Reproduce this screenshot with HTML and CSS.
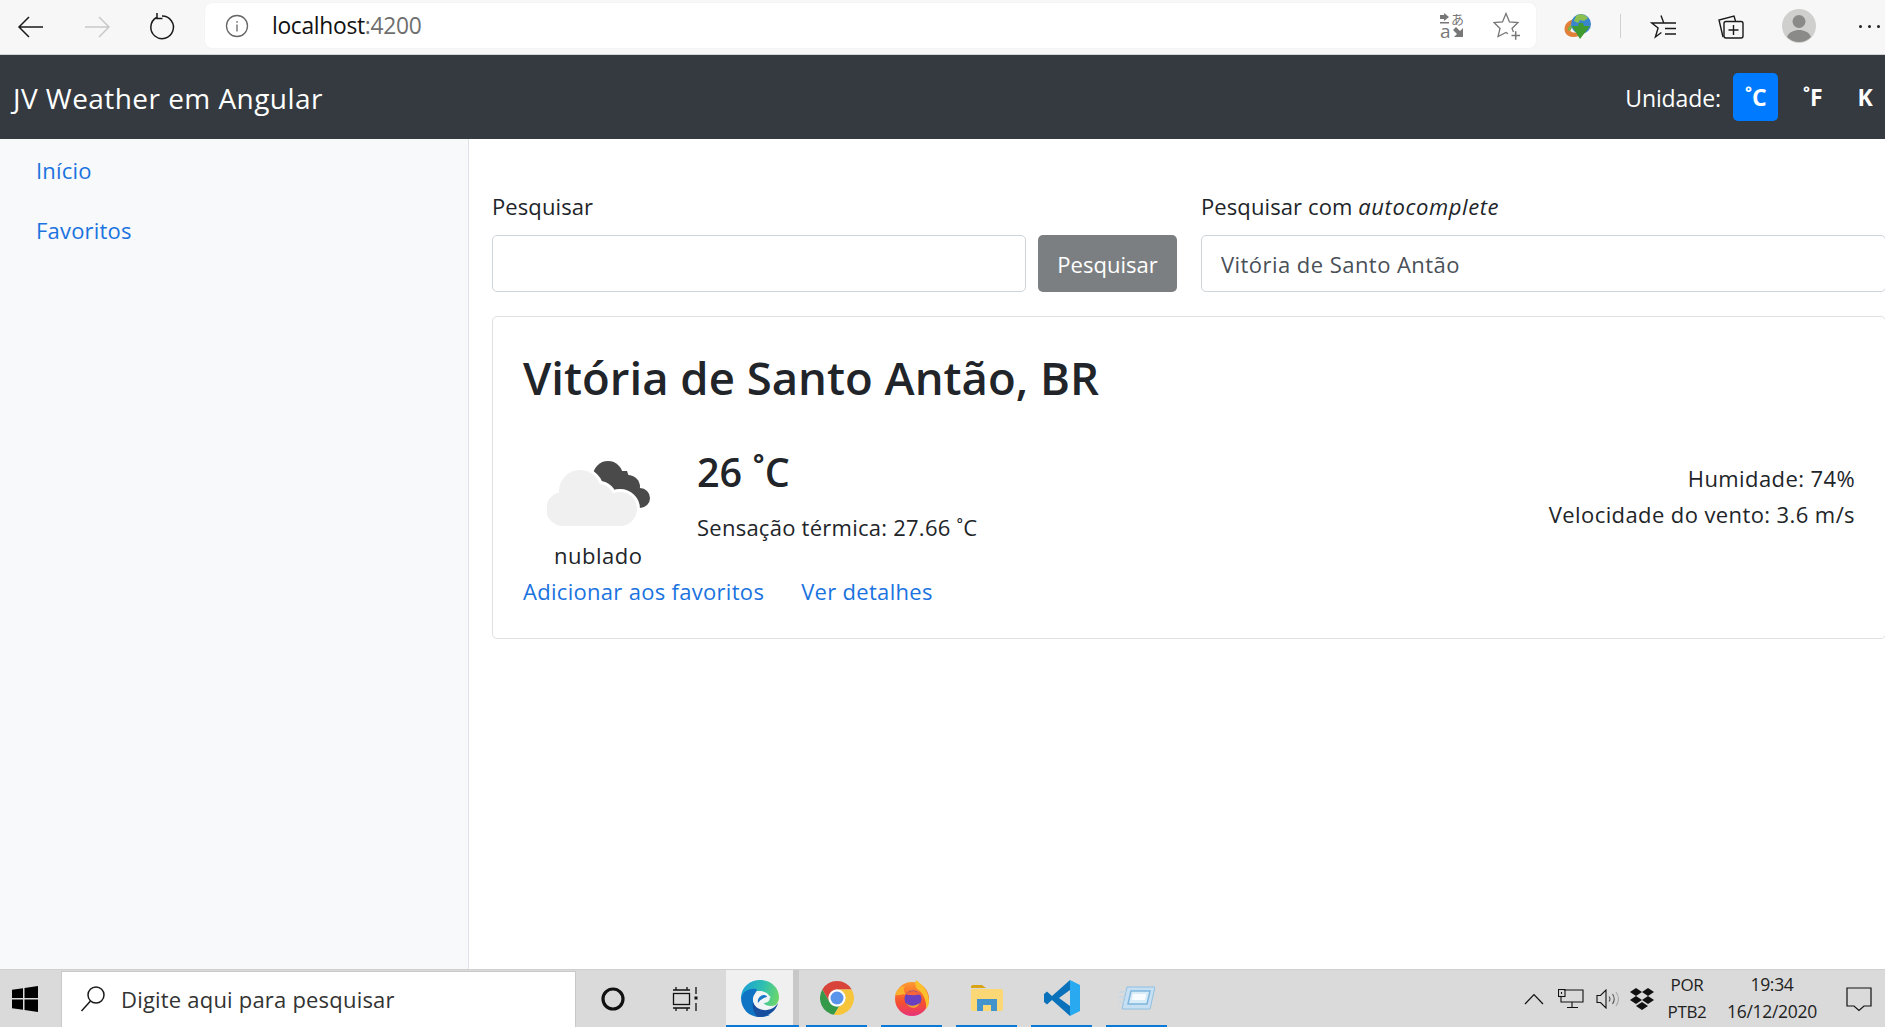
FILE: index.html
```html
<!DOCTYPE html>
<html lang="pt">
<head>
<meta charset="utf-8">
<title>JV Weather em Angular</title>
<link rel="stylesheet" href="styles.css">
</head>
<body>
<div class="page">
  <div class="toolbar">
    <div class="tool-btn"><svg width="30" height="30" viewBox="0 0 30 30" fill="none" stroke="#1a1a1a" stroke-width="1.5"><path d="M27 15H3M13 5 3 15l10 10"/></svg></div>
    <div class="tool-btn"><svg width="30" height="30" viewBox="0 0 30 30" fill="none" stroke="#c9c9c9" stroke-width="1.5"><path d="M3 15h24M17 5l10 10-10 10"/></svg></div>
    <div class="tool-btn tool-reload"><svg width="30" height="30" viewBox="0 0 30 30" fill="none" stroke="#1a1a1a" stroke-width="1.5"><path d="M9.500 5.500A11.300 11.300 0 1 0 15 4M10 1v5.500h5.500"/></svg></div>
    <div class="address">
      <svg class="info" width="24" height="24" viewBox="0 0 24 24" fill="none" stroke="#666" stroke-width="1.3"><circle cx="12" cy="12" r="10.500"/><path d="M12 10.500v7M12 7v1.800"/></svg>
      <span class="url">localhost<span class="url-port">:4200</span></span>
      <svg class="addr-translate" width="36" height="36" viewBox="-4 -4 36 36"><g fill="#777"><path d="M2 3h4V1l5 4-5 4V7H2zM2 10h9v1.500H2z"/><path d="M25 16v9h-9l3-3-4-4 3-3 4 4z"/></g><text x="13" y="12" class="tr-jp">あ</text><text x="2" y="26" class="tr-a">a</text></svg>
      <svg class="addr-star" width="28" height="28" viewBox="0 0 28 28" fill="none" stroke="#777" stroke-width="1.300"><path d="M20.500 20 19 16.500l6-6-8.500-.5L13 1.500 9.500 10 1 10.500l6 6-2 8 8-4 2 1.200"/><path d="M18.500 23.500h8.500M22.700 19.300v8.500" stroke-width="1.500"/></svg>
    </div>
    <svg class="ext-idm" width="30" height="30" viewBox="0 0 30 30"><path d="M2 20C0 13 5 8 12 7l2 4c-4 0-8 3-7 7 1 3 5 3 8 2l1 4c-6 2-12 1-14-4z" fill="#e2803a"/><path d="M5 19c-1-4 3-7 7-8l1 3c-3 0-5 2-5 4z" fill="#7cb342"/><circle cx="18" cy="12" r="10" fill="#3a86cc"/><path d="M13 4c4-3 9-2 12 2l-4 3-4-1-2 3-4-2z" fill="#8cc152"/><path d="M9 14h6l1-3h4l1 3h6L17 27z" fill="#3f9a2f"/></svg>
    <span class="tool-sep"></span>
    <svg class="tool-fav" width="28" height="28" viewBox="0 0 28 28" fill="none" stroke="#1a1a1a" stroke-width="1.400"><path d="M11 2.500l2.800 7.500h-12l6.300 5-2.700 9 6-4.500M14 10h12M15 15.500h11M15 21h11"/></svg>
    <svg class="tool-coll" width="28" height="28" viewBox="0 0 28 28" fill="none" stroke="#1a1a1a" stroke-width="1.400"><path d="M6 24 2 7l15-4 1.500 5"/><rect x="7" y="8.500" width="19" height="16.500" rx="2"/><path d="M16.500 12v10M11.500 17h10"/></svg>
    <svg class="tool-avatar" width="34" height="34" viewBox="0 0 34 34"><circle cx="17" cy="17" r="17" fill="#cfcfcd"/><circle cx="17" cy="12.500" r="6.500" fill="#8a8a88"/><path d="M5 28c2-5 7-7 12-7s10 2 12 7a17 17 0 0 1-24 0z" fill="#8a8a88"/></svg>
    <div class="tool-dots"><i></i><i></i><i></i></div>
  </div>

  <nav class="navbar">
    <span class="brand">JV Weather em Angular</span>
    <div class="units">
      <span class="units-label">Unidade:</span>
      <span class="unit unit-active">˚C</span>
      <span class="unit">˚F</span>
      <span class="unit">K</span>
    </div>
  </nav>

  <div class="body">
    <aside class="sidebar">
      <a class="side-link">Início</a>
      <a class="side-link">Favoritos</a>
    </aside>
    <main class="main">
      <div class="search-grid">
        <div class="field">
          <label class="label">Pesquisar</label>
          <div class="input-row">
            <input class="input" type="text">
            <button class="btn">Pesquisar</button>
          </div>
        </div>
        <div class="field">
          <label class="label">Pesquisar com <em>autocomplete</em></label>
          <div class="input-row">
            <input class="input" type="text" value="Vitória de Santo Antão">
          </div>
        </div>
      </div>
      <section class="card">
        <h2 class="city">Vitória de Santo Antão, BR</h2>
        <div class="weather">
          <div class="cond">
            <svg class="cloud" width="103" height="66" viewBox="0 0 103 66">
              <g fill="#4a4a4a"><circle cx="61" cy="15" r="15"/><circle cx="81" cy="26" r="12"/><circle cx="93" cy="37" r="10"/><path d="M50 10h30l13 37H60z"/></g>
              <g fill="#fff" stroke="#fff" stroke-width="6"><circle cx="33" cy="30" r="21"/><circle cx="52" cy="38" r="15"/><circle cx="73" cy="48" r="17"/></g>
              <g fill="#f0f0f0"><circle cx="33" cy="30" r="21"/><circle cx="52" cy="38" r="15"/><circle cx="16" cy="48" r="17"/><circle cx="73" cy="48" r="17"/><rect x="16" y="35" width="57" height="30"/></g>
            </svg>
            <span class="cond-text">nublado</span>
          </div>
          <div class="temps">
            <div class="temp">26 ˚C</div>
            <div class="feels">Sensação térmica: 27.66 ˚C</div>
          </div>
          <div class="extras">
            <div>Humidade: 74%</div>
            <div>Velocidade do vento: 3.6 m/s</div>
          </div>
        </div>
        <div class="card-links">
          <a class="card-link">Adicionar aos favoritos</a>
          <a class="card-link">Ver detalhes</a>
        </div>
      </section>
    </main>
  </div>

  <footer class="taskbar">
    <div class="start"><svg width="26" height="26" viewBox="0 0 26 26" fill="#000"><path d="M0 3.800 11 2.200V12H0zM12.500 2 26 0v12H12.500zM0 13.500h11v10.300L0 22.200zM12.500 13.500H26V26l-13.500-2z"/></svg></div>
    <div class="task-search">
      <svg width="28" height="28" viewBox="0 0 28 28" fill="none" stroke="#1a1a1a" stroke-width="1.500"><circle cx="17" cy="10" r="8"/><path d="M11.500 16 2.500 26"/></svg>
      <span>Digite aqui para pesquisar</span>
    </div>
    <div class="tb-cortana"><svg width="26" height="26" viewBox="0 0 26 26" fill="none" stroke="#111" stroke-width="3.200"><circle cx="13" cy="13" r="10"/></svg></div>
    <div class="tb-taskview"><svg width="26" height="26" viewBox="0 0 26 26" fill="none" stroke="#111" stroke-width="1.300"><path d="M1 4h17M4 1v3M15 1v3M1 22h17M4 25v-3M15 25v-3"/><rect x="1.500" y="7.500" width="16" height="11"/><path d="M24 1v7M24 17v8"/><rect x="22.500" y="10.500" width="3" height="3" fill="#111" stroke="none"/></svg></div>
    <div class="tile tile-edge"><svg width="38" height="38" viewBox="0 0 38 38"><defs><linearGradient id="eg1" x1="0" y1="0.300" x2="1" y2="0.500"><stop offset="0" stop-color="#1b9fd6"/><stop offset=".55" stop-color="#2fc0b0"/><stop offset="1" stop-color="#6bd66a"/></linearGradient></defs><path d="M0 19C0 8 9 1 19 1c11 0 19 8 19 17 0 6-4 10-9 10-4 0-7-2-8-4l9-6-9-6H12z" fill="url(#eg1)"/><path d="M0 19c2-7 9-10 15-9 3 1-2 4-3 9-1 8 8 16 17 17-3 1.500-7 2-10 2C8 38 0 30 0 19z" fill="#0f74c4"/><path d="M12 23c2 7 11 10 18 7 3-1 5-3 7-6-2 8-10 14-18 14-1 0-2 0-3-.5-3-3-5-9-4-14.500z" fill="#174f9e"/><path d="M12.500 22c0-6 5-10 11-9 4 1 6 5 5 8-1 2-3 3-6 3 2 3 8 4 12 2-4 4-12 5-17 2-3-1-5-3-5-6z" fill="#f2f5f6"/><path d="M17 24c-1-4 2-8 6-8 2 0 3 1 3 2-4 1-7 3-9 6z" fill="#1a78c8"/></svg></div>
    <span class="tile-sep"></span>
    <div class="tile"><svg width="34" height="34" viewBox="0 0 34 34"><path d="M17 0a17 17 0 0 1 14.700 8.500H17a8.500 8.500 0 0 0-7.400 12.700L2.300 8.500A17 17 0 0 1 17 0z" fill="#d9443a"/><path d="M2.300 8.500l7.300 12.700a8.500 8.500 0 0 0 9.600 4L14 33.800A17 17 0 0 1 2.300 8.500z" fill="#349a4a"/><path d="M31.700 8.500A17 17 0 0 1 14 33.800l5.200-8.600A8.500 8.500 0 0 0 17 8.500z" fill="#f6c53a"/><circle cx="17" cy="17" r="8.500" fill="#fff"/><circle cx="17" cy="17" r="6.500" fill="#5a94ea"/></svg></div>
    <div class="tile"><svg width="34" height="36" viewBox="0 0 34 36"><defs><linearGradient id="ffx" x1="0" y1="0" x2="0" y2="1"><stop offset="0" stop-color="#ff9a2e"/><stop offset=".6" stop-color="#f5502e"/><stop offset="1" stop-color="#e8327a"/></linearGradient></defs><circle cx="17" cy="19" r="17" fill="url(#ffx)"/><path d="M21 0c7 5 13 12 13 21 0 3-1 6-3 8 1-8-3-17-9-20-2-3-2-6-1-9z" fill="#fbc02d"/><path d="M0 15c2-6 6-9 10-9-2 3-1 6 1 8-4 0-8 2-11 1z" fill="#fbb02d"/><circle cx="18" cy="19" r="8.500" fill="#6a3fc0"/><path d="M11 14c4-4 11-4 15 1-4-1-7 1-10 0-2 0-4 0-5-1z" fill="#f7653a"/><path d="M11 23c3 3 8 4 14 0-2 6-10 7-14 0z" fill="#f7a02f"/></svg></div>
    <div class="tile"><svg width="32" height="26" viewBox="0 0 32 26"><path d="M0 2a2 2 0 0 1 2-2h9l4 3H0z" fill="#d9a316"/><path d="M0 4h30a2 2 0 0 1 2 2v18a2 2 0 0 1-2 2H2a2 2 0 0 1-2-2z" fill="#fbd775"/><path d="M6 26V14h20v12h-6v-6h-8v6z" fill="#4393cc"/></svg></div>
    <div class="tile"><svg width="36" height="36" viewBox="0 0 36 36"><path d="M26 0 36 5v26l-10 5z" fill="#29a9ef"/><path d="M26 0 8 16 3 11.500 0 14v8l3 2.500L8 20l18 16V26L15 18l11-8z" fill="#0a72bb"/></svg></div>
    <div class="tile"><svg width="36" height="24" viewBox="0 0 36 24" fill="none"><path d="M8 1h28l-5 22H3z" fill="#c6dff2" stroke="#8fc0e2"/><path d="M12 5h19l-3 13H9z" fill="#d8ecf8" stroke="#7fb6dc" stroke-width="1.500"/><path d="M14 8h13l-1 6H13z" fill="#f6fcff"/><path d="M0 6h8M0 11h6M0 16h5" stroke="#b7d6ec"/></svg></div>
    <div class="tray">
      <svg class="tray-chev" width="20" height="12" viewBox="0 0 20 12" fill="none" stroke="#111" stroke-width="1.200"><path d="M1 11 10 1.500 19 11"/></svg>
      <svg class="tray-net" width="26" height="20" viewBox="0 0 26 20" fill="none" stroke="#111" stroke-width="1.100"><path d="M6 1h19v12H3V8M14 13v5M9 18.500h11"/><rect x=".5" y=".5" width="6.500" height="7"/><path d="M3.500 3v2"/></svg>
      <svg class="tray-vol" width="24" height="20" viewBox="0 0 24 20" fill="none" stroke="#111" stroke-width="1.100"><path d="M1 6.500h3.500L10 1v18l-5.500-5.500H1z"/><path d="M13 7.500q2 2.500 0 5M16.500 5q3.500 5 0 10" stroke="#555"/><path d="M20 3q5 7 0 14" stroke="#aaa"/></svg>
      <svg class="tray-drop" width="24" height="22" viewBox="0 0 24 22" fill="#111"><path d="M6 0 12 4 6 8 0 4zM18 0l6 4-6 4-6-4zM6 8l6 4-6 4-6-4zM18 8l6 4-6 4-6-4zM12 14l6 4-6 4-6-4z"/></svg>
      <div class="tray-lang"><span>POR</span><span>PTB2</span></div>
      <div class="tray-clock"><span>19:34</span><span>16/12/2020</span></div>
      <svg class="tray-notif" width="26" height="26" viewBox="0 0 26 26" fill="none" stroke="#111" stroke-width="1.200"><path d="M1 2h24v18h-7l-5 4.500L8 20H1z"/></svg>
    </div>
  </footer>
</div>
</body>
</html>
```

FILE: styles.css
```css
* { box-sizing: border-box; }
html, body { margin: 0; height: 100%; overflow: hidden; }
body { font-family: "Open Sans", "Noto Sans", sans-serif; color: #212529; font-size: 22px; }
.page { display: flex; flex-direction: column; height: 1027px; width: 1885px; overflow: hidden; }

.toolbar { height: 55px; flex: none; background: #f7f7f7; border-bottom: 1px solid #d4d4d4; display: flex; align-items: center; position: relative; padding-left: 16px; }
.tool-btn { width: 66px; height: 30px; display: flex; align-items: center; justify-content: flex-start; }
.tool-reload { margin-left: -1px; margin-right: 1px; }
.address { width: 1331px; height: 45px; margin-left: -9px; margin-top: -3px; background: #fff; border-radius: 7px; display: flex; align-items: center; padding-left: 20px; box-shadow: 0 0 2px rgba(0,0,0,.05); }
.info { flex: none; }
.url { margin-left: 23px; font-size: 22.800px; color: #111; letter-spacing: -.3px; }
.url-port { color: #6f6f6f; }
.addr-translate { margin: 0 -4px 0 auto; }
.tr-jp { font-size: 13px; fill: #777; font-family: "Noto Sans CJK JP", sans-serif; }
.tr-a { font-size: 19px; fill: #777; }
.addr-star { margin-left: 27px; margin-right: 15px; }
.ext-idm { margin-left: 27px; }
.tool-sep { width: 1px; height: 24px; background: #d0d0d0; margin-left: 27px; margin-top: -2px; }
.tool-fav { margin-left: 29px; }
.tool-coll { margin-left: 39px; }
.tool-avatar { margin-left: 37px; margin-top: -2px; }
.tool-dots { display: flex; gap: 6px; margin-left: 43px; margin-top: -2px; }
.tool-dots i { width: 3px; height: 3px; background: #222; border-radius: 50%; }

.navbar { height: 84px; flex: none; background: #343a40; color: #fff; display: flex; align-items: center; justify-content: space-between; padding: 0 5px 0 13px; }
.brand { font-size: 28px; letter-spacing: .45px; padding-top: 1px; }
.units { display: flex; align-items: center; }
.units-label { font-size: 23px; letter-spacing: -.1px; margin-right: 12px; padding-top: 1px; }
.unit { font-weight: 700; font-size: 23px; height: 48px; display: flex; align-items: center; justify-content: center; border-radius: 5px; width: 45px; margin-right: 12px; letter-spacing: -.3px; }
.unit-active { background: #007bff; }
.unit:last-child { width: 30px; margin-left: 3px; margin-right: 0; }

.body { flex: 1; display: flex; min-height: 0; }
.sidebar { width: 469px; flex: none; background: #f8f9fa; border-right: 1px solid #dee2e6; padding-top: 1px; display: flex; flex-direction: column; }
.side-link { color: #1a73e0; padding: 0 36px; height: 60px; display: flex; align-items: center; letter-spacing: .2px; }

.main { width: 1417px; flex: none; padding: 0 0 0 23px; }
.search-grid { display: grid; grid-template-columns: 685px 685px; column-gap: 24px; padding-top: 51px; }
.label { display: block; line-height: 32px; margin-bottom: 13px; letter-spacing: .1px; }
.label em { letter-spacing: .6px; }
.input-row { display: flex; gap: 12px; }
.input { flex: 1; min-width: 0; height: 57px; border: 1px solid #ced4da; border-radius: 5px; padding: 0 19px; font: inherit; color: #495057; letter-spacing: .45px; }
.btn { width: 139px; flex: none; height: 57px; border: 0; background: #7c7f82; color: #fff; border-radius: 5px; font: inherit; padding: 0; }

.card { margin-top: 24px; width: 1394px; height: 323px; border: 1px solid #dfdfdf; border-radius: 5px; padding: 30px; }
.city { margin: 0; font-weight: 600; font-size: 45.500px; line-height: 60px; }
.weather { display: flex; margin-top: 40px; align-items: flex-start; }
.cond { width: 174px; flex: none; display: flex; flex-direction: column; align-items: flex-start; padding-top: 14px; }
.cloud { margin-left: 24px; }
.cond-text { line-height: 32px; margin-top: 12px; margin-left: 31px; letter-spacing: .5px; }
.temps { flex: 1; }
.temp { font-size: 39.500px; line-height: 50px; font-weight: 600; }
.feels { line-height: 32px; margin-top: 14px; letter-spacing: .25px; }
.extras { text-align: right; line-height: 36px; padding-top: 13px; letter-spacing: .4px; }
.card-links { display: flex; gap: 37px; margin-top: 4px; }
.card-link { color: #1a73e0; line-height: 32px; letter-spacing: .3px; }

.taskbar { height: 58px; flex: none; background: #dadada; display: flex; align-items: center; border-top: 1px solid #cfcfcf; position: relative; }
.start { width: 62px; height: 100%; display: flex; align-items: center; justify-content: center; flex: none; padding-right: 12px; }
.task-search { width: 513px; height: 56px; margin-top: 2px; background: #fff; flex: none; display: flex; align-items: center; gap: 14px; padding: 0 0 2px 17px; font-size: 22px; color: #333; letter-spacing: .2px; box-shadow: 0 0 0 1px #c9c9c9; }
.tb-cortana { width: 84px; display: flex; justify-content: center; margin-left: -1px; padding-right: 7px; }
.tb-taskview { width: 68px; display: flex; justify-content: center; flex: none; padding-right: 14px; }
.tile { width: 61px; height: 100%; margin-right: 14px; display: flex; align-items: center; justify-content: center; border-bottom: 2px solid #0a78d7; flex: none; }
.tile-edge { width: 67px; margin-right: 0; background: #f0f0f0; }
.tile-sep { width: 6px; height: 100%; background: #c8c8c8; margin-right: 7px; border-bottom: 2px solid #0a78d7; flex: none; }
.tray { margin-left: auto; display: flex; align-items: center; height: 100%; }
.tray-chev { margin-right: 14px; }
.tray-net { margin-right: 12px; }
.tray-vol { margin-right: 10px; }
.tray-drop { margin-right: 9px; }
.tray-lang, .tray-clock { display: flex; flex-direction: column; align-items: center; line-height: 27px; color: #222; letter-spacing: -.3px; padding-bottom: 1px; }
.tray-lang { width: 48px; font-size: 17px; }
.tray-clock { width: 100px; margin-left: 11px; font-size: 17.500px; }
.tray-notif { margin-left: 24px; margin-right: 13px; }
```
